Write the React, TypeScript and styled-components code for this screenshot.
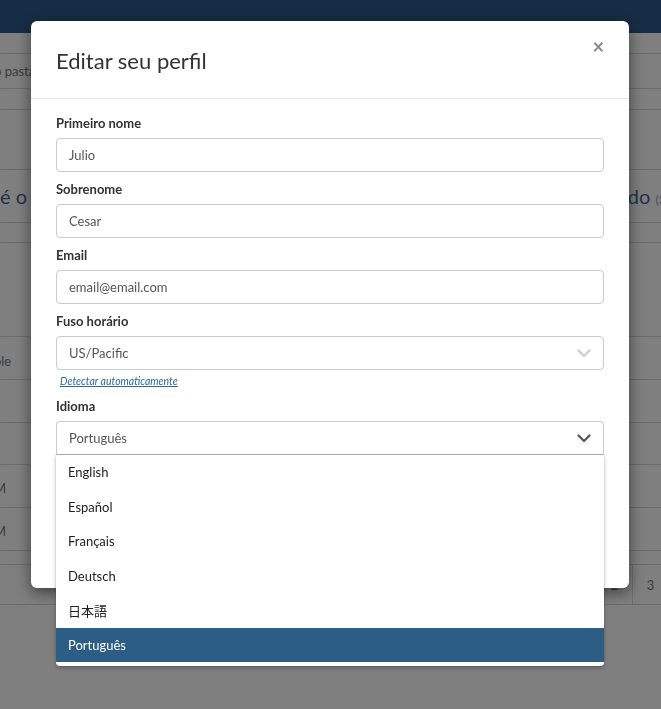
import React from "react";
import styled, {createGlobalStyle} from "styled-components";

const GlobalStyle = createGlobalStyle`
  html, body {
    margin: 0;
    padding: 0;
    background: #ffffff;
    font-family: Lato, "Noto Sans", "Liberation Sans", sans-serif;
  }
  * {
    box-sizing: border-box;
  }
`;

interface IFieldProps {
    label: string;
    value: string;
}

const textFields: Array<IFieldProps> = [
    {label: "Primeiro nome", value: "Julio"},
    {label: "Sobrenome", value: "Cesar"},
    {label: "Email", value: "email@email.com"},
];

const languages = ["English", "Español", "Français", "Deutsch", "日本語", "Português"];

const Chevron: React.FC<{ light?: boolean }> = ({light}) => (
    <svg width="14" height="9" viewBox="0 0 14 9">
        <path d="M1.5 1.5 L7 7 L12.5 1.5" fill="none" stroke={light ? "#cccccc" : "#555555"}
              strokeWidth="2.2" strokeLinecap="round" strokeLinejoin="round"/>
    </svg>
);

const App: React.FC = () => {
    return (
        <>
            <GlobalStyle/>
            <Page>
                <Navbar/>
                <BgRow $height={21}/>
                <BgRow $height={35}><BgText>o pasta</BgText></BgRow>
                <BgRow $height={21}/>
                <BgRow $height={60}/>
                <BgHeadingRow>
                    <BgHeading>é o Status da pasta</BgHeading>
                    <BgHeading>ido <small>(3)</small></BgHeading>
                </BgHeadingRow>
                <BgRow $height={20}/>
                <BgRow $height={94}/>
                <BgRow $height={43} $shift={6}><BgText>ple</BgText></BgRow>
                <BgRow $height={43}/>
                <BgRow $height={42}/>
                <BgRow $height={43} $shift={4}><BgText>M</BgText></BgRow>
                <BgRow $height={43} $shift={4}><BgText>M</BgText></BgRow>
                <BgRow $height={14}/>
                <Pagination>
                    <PageCell>1</PageCell>
                    <PageCell>2</PageCell>
                    <PageCell>3</PageCell>
                </Pagination>
            </Page>

            <Backdrop>
                <Modal>
                    <ModalHeader>
                        <Title>Editar seu perfil</Title>
                        <CloseButton>×</CloseButton>
                    </ModalHeader>
                    <ModalBody>
                        {textFields.map((field, index: number) => (
                            <FormGroup key={`field-${index}`}>
                                <Label>{field.label}</Label>
                                <Input>{field.value}</Input>
                            </FormGroup>
                        ))}
                        <FormGroup $tight>
                            <Label>Fuso horário</Label>
                            <Input>
                                <span>US/Pacific</span>
                                <Chevron light/>
                            </Input>
                            <HelpLink>Detectar automaticamente</HelpLink>
                        </FormGroup>
                        <FormGroup>
                            <Label>Idioma</Label>
                            <SelectWrap>
                                <Input $open>
                                    <span>Português</span>
                                    <Chevron/>
                                </Input>
                                <Menu>
                                    {languages.map((lang) => (
                                        <Option key={lang} $selected={lang === "Português"}>{lang}</Option>
                                    ))}
                                </Menu>
                            </SelectWrap>
                        </FormGroup>
                    </ModalBody>
                </Modal>
            </Backdrop>
        </>
    );
};

export default App;

const Page = styled.div`
  width: 100%;
  min-height: 709px;
  background: #ffffff;
  overflow: hidden;
`;

const Navbar = styled.div`
  height: 33px;
  background: #2e5a8a;
`;

const BgRow = styled.div<{ $height: number; $shift?: number }>`
  height: ${p => p.$height}px;
  padding-top: ${p => p.$shift || 0}px;
  border-bottom: 1px solid #d8d8d8;
  display: flex;
  align-items: center;
`;

const BgText = styled.span`
  font-size: 13px;
  color: #777777;
  text-indent: -6px;
  white-space: nowrap;
`;

const BgHeadingRow = styled.div`
  height: 53px;
  border-bottom: 1px solid #d8d8d8;
  display: grid;
  grid-template-columns: minmax(0, 1fr) 38px;
  align-items: center;
  overflow: hidden;

  small {
    font-size: 12px;
    color: #999999;
  }
`;

const BgHeading = styled.span`
  font-size: 20px;
  color: #3d6892;
  white-space: nowrap;
  overflow: hidden;
`;

const Pagination = styled.div`
  height: 40px;
  display: flex;
  padding-left: 560px;
  border-bottom: 1px solid #d8d8d8;
`;

const PageCell = styled.div`
  flex: 0 0 36px;
  border-left: 1px solid #dddddd;
  display: flex;
  align-items: center;
  justify-content: center;
  font-size: 13px;
  color: #777777;
`;

const Backdrop = styled.div`
  position: fixed;
  inset: 0;
  background: rgba(0, 0, 0, 0.5);
`;

const Modal = styled.div`
  position: absolute;
  top: 21px;
  left: 31px;
  width: 598px;
  height: 567px;
  background: #ffffff;
  border-radius: 6px;
  box-shadow: 0 5px 15px rgba(0, 0, 0, 0.5);
`;

const ModalHeader = styled.div`
  height: 78px;
  padding: 0 25px;
  border-bottom: 1px solid #e5e5e5;
  display: flex;
  align-items: center;
  justify-content: space-between;
`;

const Title = styled.h4`
  margin: 2px 0 0;
  font-size: 22px;
  font-weight: 400;
  color: #333333;
`;

const CloseButton = styled.span`
  align-self: flex-start;
  margin-top: 15px;
  margin-right: 0;
  font-size: 20px;
  font-weight: 700;
  line-height: 1;
  color: #888888;
`;

const ModalBody = styled.div`
  padding: 15px 25px 0;
`;

const FormGroup = styled.div<{ $tight?: boolean }>`
  margin-bottom: ${p => (p.$tight ? 9 : 8)}px;
`;

const Label = styled.div`
  font-size: 13px;
  font-weight: 700;
  line-height: 19px;
  color: #333333;
  margin-bottom: 5px;
`;

const Input = styled.div<{ $open?: boolean }>`
  height: 34px;
  padding: 0 12px;
  border: 1px solid #cccccc;
  border-radius: ${p => (p.$open ? "4px 4px 0 0" : "4px")};
  border-bottom-color: ${p => (p.$open ? "#b3b3b3" : "#cccccc")};
  display: flex;
  align-items: center;
  justify-content: space-between;
  font-size: 13px;
  color: #555555;
`;

const HelpLink = styled.div`
  margin: 4px 0 0 4px;
  font-size: 10.5px;
  line-height: 14px;
  font-style: italic;
  text-decoration: underline;
  color: #2b6a9e;
`;

const SelectWrap = styled.div`
  position: relative;
`;

const Menu = styled.div`
  position: absolute;
  top: 100%;
  left: 0;
  right: 0;
  padding-bottom: 4px;
  background: #ffffff;
  border-radius: 0 0 4px 4px;
  box-shadow: 0 2px 4px rgba(0, 0, 0, 0.25), 0 0 0 1px rgba(0, 0, 0, 0.04);
`;

const Option = styled.div<{ $selected?: boolean }>`
  height: 34.5px;
  padding: 0 12px;
  display: flex;
  align-items: center;
  font-size: 13px;
  color: ${p => (p.$selected ? "#ffffff" : "#222222")};
  background: ${p => (p.$selected ? "#2c5d84" : "transparent")};
  font-family: Lato, "Noto Sans CJK JP", sans-serif;
`;
